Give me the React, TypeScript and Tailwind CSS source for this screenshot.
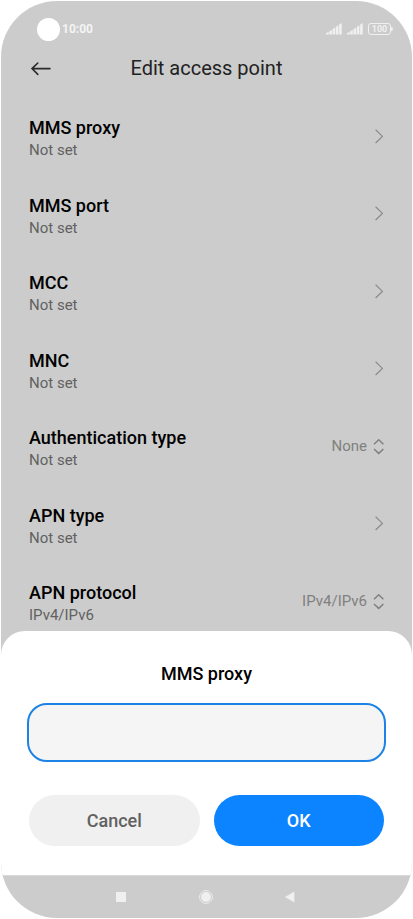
type Setting = {
  title: string;
  detail: string;
  value?: string;
};

const settings: Setting[] = [
  { title: "MMS proxy", detail: "Not set" },
  { title: "MMS port", detail: "Not set" },
  { title: "MCC", detail: "Not set" },
  { title: "MNC", detail: "Not set" },
  { title: "Authentication type", detail: "Not set", value: "None" },
  { title: "APN type", detail: "Not set" },
  { title: "APN protocol", detail: "IPv4/IPv6", value: "IPv4/IPv6" },
];

function Signal() {
  return (
    <svg width="16" height="12" viewBox="0 0 16 12" fill="#f0f0f0">
      <path d="M0 11.4V10.2L2.6 8.8V11.4zM3.2 11.4V8.4L5.8 6.8V11.4zM6.5 11.4V6.2L9.1 4.5V11.4zM9.8 11.4V4L12.4 2.3V11.4zM13.1 11.4V1.8L15.7 .1V11.4z" />
    </svg>
  );
}

function StatusBar() {
  return (
    <div className="flex h-[47px] items-center pl-9 pr-[19px] pt-[9px]">
      <div className="h-[23px] w-[23px] rounded-full bg-white" />
      <span className="ml-[2px] flex-1 text-[12px] font-bold leading-4 text-[#f4f4f4]">
        10:00
      </span>
      <div className="flex items-center gap-[5px]">
        <Signal />
        <Signal />
        <div className="flex items-center">
          <div className="flex h-3 w-[23px] items-center justify-center rounded-[3px] border border-[#f0f0f0] text-[9px] font-bold leading-none text-[#f0f0f0]">
            100
          </div>
          <div className="h-1 w-[2px] rounded-r-sm bg-[#f0f0f0]" />
        </div>
      </div>
    </div>
  );
}

function Chevron() {
  return (
    <svg width="10" height="16" viewBox="0 0 10 16" fill="none" stroke="#8c8c8c" strokeWidth="1.2">
      <path d="M1.6 .8L8.4 7.4L1.6 14" />
    </svg>
  );
}

function UpDown() {
  return (
    <svg width="11" height="16" viewBox="0 0 11 16" fill="none" stroke="#808080" strokeWidth="1.5">
      <path d="M1 5.2L5.7 .8L10.4 5.2M1 10L5.7 14.4L10.4 10" />
    </svg>
  );
}

function SettingRow({ title, detail, value }: Setting) {
  return (
    <li>
      <button type="button" className="flex w-full items-start justify-between text-left">
        <span className="flex h-11 flex-col">
          <span className="text-[18px] font-medium leading-6 text-black">{title}</span>
          <span className="text-[15px] leading-5 text-[#616161]">{detail}</span>
        </span>
        <span className="flex h-[41px] items-center gap-[6px] text-[15px] text-[#808080]">
          {value}
          {value ? <UpDown /> : <Chevron />}
        </span>
      </button>
    </li>
  );
}

function ProxyDialog() {
  return (
    <form
      role="dialog"
      aria-labelledby="dialog-title"
      className="rounded-t-[24px] bg-white px-7 pb-[29px] pt-[31px]"
    >
      <label
        id="dialog-title"
        htmlFor="proxy"
        className="block text-center text-[18px] font-medium leading-6 text-black"
      >
        MMS proxy
      </label>
      <div className="-mx-[2px] mt-[17px]">
        <input
          id="proxy"
          type="text"
          className="block h-[59px] w-full rounded-[20px] border-2 border-[#1c82e6] bg-[#f5f5f5] px-4 text-[18px] outline-none"
        />
      </div>
      <div className="mt-[33px] grid grid-cols-2 gap-[14px]">
        <button
          type="button"
          className="h-[51px] rounded-full bg-[#f0f0f0] text-[18px] font-medium text-[#616161]"
        >
          Cancel
        </button>
        <button
          type="button"
          className="h-[51px] rounded-full bg-[#0d84ff] text-[18px] font-medium text-white"
        >
          OK
        </button>
      </div>
    </form>
  );
}

function NavBar() {
  return (
    <nav className="flex h-[43px] items-center justify-center gap-[72px] border-t border-[#d9d9d9] pr-[3px]">
      <button type="button" aria-label="Recent apps">
        <svg width="12" height="12" viewBox="0 0 12 12">
          <rect x="1" y="1" width="10" height="10" fill="#f0f0f0" />
        </svg>
      </button>
      <button type="button" aria-label="Home">
        <svg width="14" height="14" viewBox="0 0 14 14">
          <circle cx="7" cy="7" r="6.4" fill="none" stroke="#f0f0f0" strokeWidth="0.9" />
          <circle cx="7" cy="7" r="4.9" fill="#f0f0f0" />
        </svg>
      </button>
      <button type="button" aria-label="Back">
        <svg width="10" height="12" viewBox="0 0 10 12">
          <path d="M0 6L9.4 .5V11.5z" fill="#f0f0f0" />
        </svg>
      </button>
    </nav>
  );
}

export default function App() {
  return (
    <div className="flex min-h-screen flex-col bg-white p-px font-[Roboto,sans-serif]">
      <div className="flex flex-1 flex-col overflow-hidden rounded-[56px] bg-[#cccccc]">
        <StatusBar />
        <header className="grid h-[50px] grid-cols-[32px_1fr_32px] items-start px-7 pt-[6px]">
          <button type="button" aria-label="Back" className="flex h-7 items-center">
            <svg
              width="24"
              height="16"
              viewBox="0 0 24 16"
              fill="none"
              stroke="#2b2b2b"
              strokeWidth="1.6"
              strokeLinecap="round"
            >
              <path d="M3 8.6H21M8.8 3L3 8.6L8.8 14.4" />
            </svg>
          </button>
          <h1 className="text-center text-[20px] leading-7 text-[#222222]">Edit access point</h1>
        </header>
        <ul className="flex flex-1 flex-col justify-between px-7 pb-[6px] pt-[18px]">
          {settings.map((setting) => (
            <SettingRow key={setting.title} {...setting} />
          ))}
        </ul>
        <ProxyDialog />
        <NavBar />
      </div>
    </div>
  );
}
